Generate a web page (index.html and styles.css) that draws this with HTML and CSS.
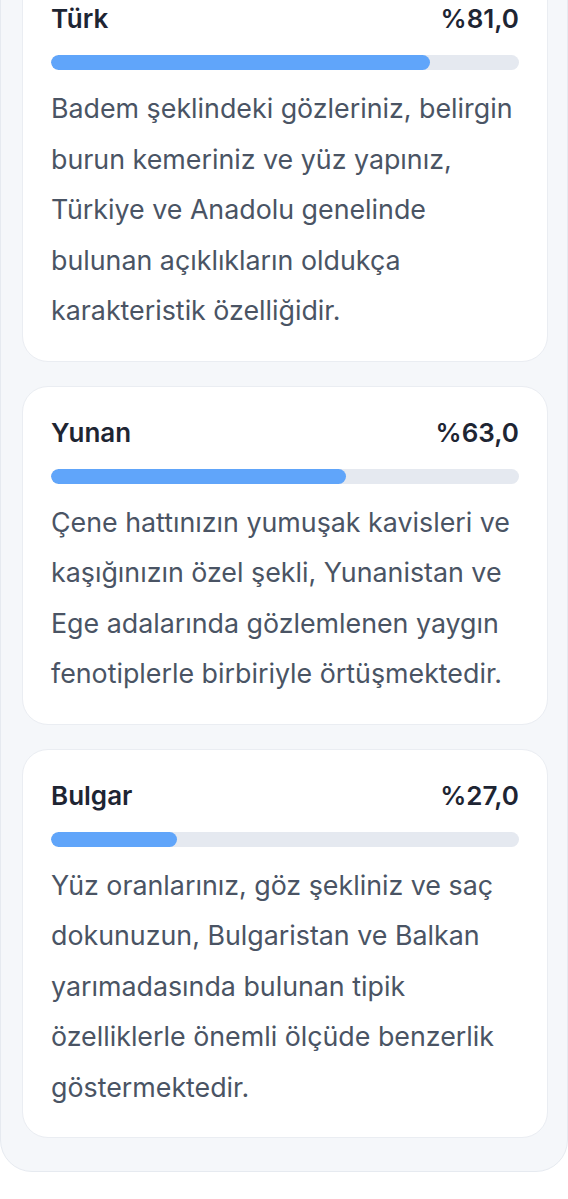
FILE: index.html
```html
<!DOCTYPE html>
<html lang="tr">
<head>
  <meta charset="UTF-8" />
  <meta name="viewport" content="width=device-width, initial-scale=1.0" />
  <title>Köken Analizi</title>
  <link rel="stylesheet" href="styles.css">
</head>
<body>
  <section class="panel">
    <div class="result-card">
      <div class="result-head">
        <span class="result-name">Türk</span>
        <span class="result-score">%81,0</span>
      </div>
      <div class="bar"><div class="bar-fill" style="width: 81%"></div></div>
      <p class="result-text">Badem şeklindeki gözleriniz, belirgin burun kemeriniz ve yüz yapınız, Türkiye ve Anadolu genelinde bulunan açıklıkların oldukça karakteristik özelliğidir.</p>
    </div>

    <div class="result-card">
      <div class="result-head">
        <span class="result-name">Yunan</span>
        <span class="result-score">%63,0</span>
      </div>
      <div class="bar"><div class="bar-fill" style="width: 63%"></div></div>
      <p class="result-text">Çene hattınızın yumuşak kavisleri ve kaşığınızın özel şekli, Yunanistan ve Ege adalarında gözlemlenen yaygın fenotiplerle birbiriyle örtüşmektedir.</p>
    </div>

    <div class="result-card">
      <div class="result-head">
        <span class="result-name">Bulgar</span>
        <span class="result-score">%27,0</span>
      </div>
      <div class="bar"><div class="bar-fill" style="width: 27%"></div></div>
      <p class="result-text">Yüz oranlarınız, göz şekliniz ve saç dokunuzun, Bulgaristan ve Balkan yarımadasında bulunan tipik özelliklerle önemli ölçüde benzerlik göstermektedir.</p>
    </div>
  </section>
</body>
</html>
```

FILE: styles.css
```css
/* Colours */
:root {
  --page: #ffffff;
  --panel: #f5f7fa;
  --panel-border: #e6eaf0;
  --card: #ffffff;
  --card-border: #eaedf2;
  --title: #1e2533;
  --text: #4a5464;
  --accent: #60a5fa;
  --track: #e5e9f0;
}

* { box-sizing: border-box; }

body {
  margin: 0;
  background-color: var(--page);
  font-family: Inter, 'Open Sans', sans-serif;
}

.panel {
  margin-top: -49px;
  padding: 20px 19px 33px 21px;
  background-color: var(--panel);
  border: 1px solid var(--panel-border);
  border-radius: 32px;
  display: flex;
  flex-direction: column;
  gap: 24px;
}

.result-card {
  background-color: var(--card);
  border: 1px solid var(--card-border);
  border-radius: 26px;
  padding: 26px 28px 25px;
}

.result-head {
  display: flex;
  justify-content: space-between;
  align-items: center;
  line-height: 40px;
  font-size: 26px;
  font-weight: 600;
  color: var(--title);
}

.bar {
  height: 15px;
  margin: 16px 0 13px;
  border-radius: 8px;
  background-color: var(--track);
  overflow: hidden;
}
.bar-fill {
  height: 100%;
  border-radius: 8px;
  background-color: var(--accent);
}

.result-text {
  margin: 0;
  font-size: 26.8px;
  line-height: 50.5px;
  color: var(--text);
}
```
